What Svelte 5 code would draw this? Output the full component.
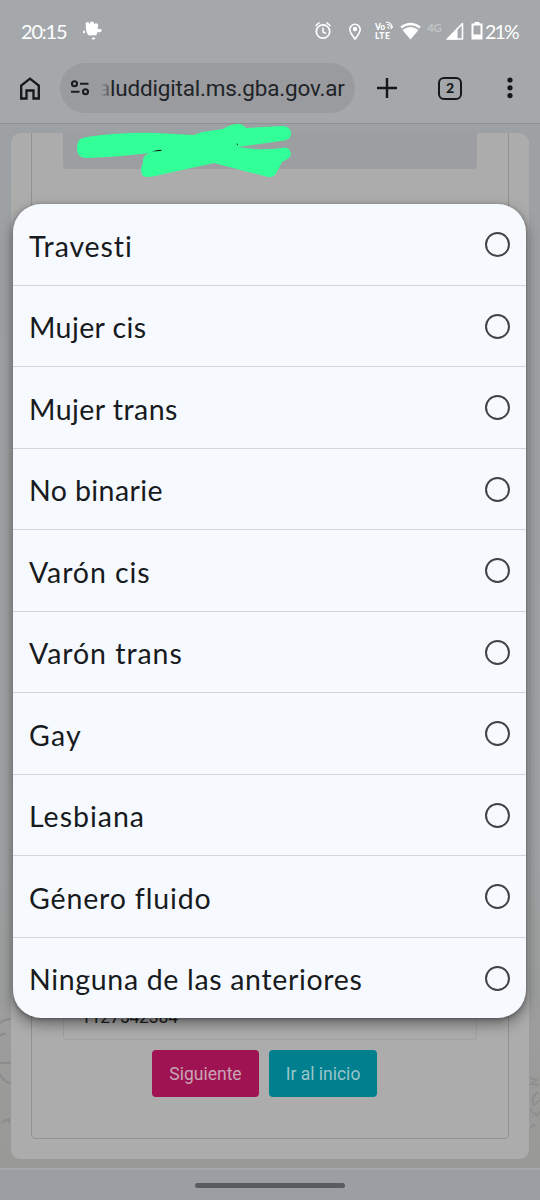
<script lang="ts">
    type Option = { label: string; spacing: number };

    // spacing is the tracking of each label, in px
    const options: Option[] = [
        { label: 'Travesti', spacing: 0.9 },
        { label: 'Mujer cis', spacing: 0.4 },
        { label: 'Mujer trans', spacing: 0.45 },
        { label: 'No binarie', spacing: 0.4 },
        { label: 'Varón cis', spacing: 0.9 },
        { label: 'Varón trans', spacing: 0.95 },
        { label: 'Gay', spacing: 1.2 },
        { label: 'Lesbiana', spacing: 1 },
        { label: 'Género fluido', spacing: 0.85 },
        { label: 'Ninguna de las anteriores', spacing: 0.67 }
    ];

    let selected = $state<string | null>(null);
</script>

<div class="screen">
    <header>
        <div class="status">
            <span class="time">20:15</span>
            <svg class="splat" width="20" height="19" viewBox="0 0 20 19" fill="#fff">
                <circle cx="9" cy="8.5" r="6" />
                <circle cx="4.5" cy="3" r="2" />
                <circle cx="9" cy="2.5" r="2" />
                <circle cx="13" cy="4.5" r="2.2" />
                <ellipse cx="15.5" cy="9.5" rx="3.2" ry="1.8" />
                <circle cx="5" cy="6" r="2.4" />
                <circle cx="12" cy="12.5" r="2" />
                <circle cx="6.5" cy="12.5" r="2" />
                <ellipse cx="1" cy="11" rx="1" ry="1.4" />
                <ellipse cx="10.5" cy="17.5" rx="1.8" ry="1" />
            </svg>
            <svg class="icons" width="171" height="24" viewBox="0 0 171 24" fill="none" stroke="#fff">
                <circle cx="9" cy="12.5" r="6.7" stroke-width="1.7" />
                <path d="M9 8.5V13l3 1.500M1.500 7l4-3.500M16.500 7l-4-3.500" stroke-width="1.6" />
                <path d="M41 20c-3-3.800-5.200-6.500-5.200-9.500a5.200 5.200 0 0 1 10.400 0C46.200 13.500 44 16.200 41 20Z" stroke-width="1.6" />
                <circle cx="41" cy="10" r="2.2" fill="#fff" stroke="none" />
                <text class="tiny" x="61" y="10.5">Vo</text>
                <text class="tiny" x="61" y="19.500" textLength="15">LTE</text>
                <path d="M73 5.500a4.500 4.500 0 0 1 4.500 4.500M72 3a7 7 0 0 1 6.500 6M73 8a2 2 0 0 1 2 2" stroke-width="1.1" />
                <path d="M87 8.500Q96.500 1.500 106 8.500" stroke-width="2.2" />
                <path d="M88.500 11Q96.500 5 104.500 11L96.500 20.500Z" fill="#fff" stroke="none" />
                <text class="net" x="113" y="12.5" textLength="15">4G</text>
                <path d="M133.500 20 148.500 4.500V20Z" stroke-width="1.6" stroke-linejoin="round" />
                <path d="M132 20.500 143.500 9V20.500Z" fill="#fff" stroke="none" />
                <path d="M158.500 5.500h9v14h-9Z" stroke-width="2" />
                <path d="M160.500 3h5v2.500h-5ZM159 15.500h8V20h-8Z" fill="#fff" stroke="none" />
            </svg>
            <span class="percent">21%</span>
        </div>
        <div class="toolbar">
            <svg class="home" width="20" height="23" viewBox="0 0 20 23" fill="none" stroke="#15181b" stroke-width="2.3">
                <path d="M1.200 21.500V8.500L10 1.600l8.800 6.900v13h-5.300v-8h-7v8Z" />
            </svg>
            <div class="address">
                <svg width="20" height="16" viewBox="0 0 20 16" fill="none" stroke="#1b1e21" stroke-width="2.1">
                    <circle cx="4.5" cy="3.7" r="2.5" />
                    <path d="M10 3.700h8.500M1 11.700h8.500" />
                    <circle cx="15.5" cy="11.7" r="2.5" />
                </svg>
                <span class="url"><i>a</i>luddigital.ms.gba.gov.ar</span>
            </div>
            <svg class="plus" width="20" height="20" viewBox="0 0 20 20" stroke="#15181b" stroke-width="2.4">
                <path d="M10 0v20M0 10h20" />
            </svg>
            <span class="tabs">2</span>
            <svg class="more" width="6" height="22" viewBox="0 0 6 22" fill="#15181b">
                <circle cx="3" cy="3" r="2.6" />
                <circle cx="3" cy="10.8" r="2.6" />
                <circle cx="3" cy="18.6" r="2.6" />
            </svg>
        </div>
    </header>

    <main>
        <svg class="doodle left" width="11" height="120" viewBox="0 0 11 120" fill="none" stroke="#8c8c8c" stroke-width="2">
            <path d="M0 9Q4 5 11 5M0 22Q4 18 6 21M0 49H11M0 60Q4 69 11 69M2 108l7-3v4" />
        </svg>
        <svg class="doodle right" width="11" height="60" viewBox="0 0 11 60" fill="none" stroke="#8c8c8c" stroke-width="1.5">
            <path d="M1 4l7 2-6 4 8 1M9 18Q1 23 5 31l6-5M1 35l7 7 3-5M2 54q3-6 4-1" />
        </svg>
        <div class="card">
            <div class="form">
                <div class="disabled"></div>
                <div class="phone">1127542384</div>
                <div class="actions">
                    <button class="next">Siguiente</button>
                    <button class="start">Ir al inicio</button>
                </div>
            </div>
        </div>
    </main>

    <footer><span></span></footer>

    <svg class="scribble" width="220" height="56" viewBox="0 0 220 56" fill="#33ff99">
        <path d="M17 12Q7 13 7 21V24Q7 33 17 33Q49 32 79 28Q72 31 73 38Q69 45 73 51Q76 53 85 51L144 38 198 52Q204 53 207 47L212 37Q221 33 221 29Q220 21 211 23Q192 26 168 22L211 16Q221 15 221 9Q221 1 212 1L176 3Q173-1 168-1Q161-1 153 4L132 7 124 10 86 8Q51 7 17 12Z" />
        <path d="M82 26.500Q88 24 92 25L91 26ZM166 18.500l2 .500v1.500Z" fill="#102a1d" />
    </svg>

    <ul class="sheet">
        {#each options as option (option.label)}
            <li>
                <button class:selected={selected === option.label} onclick={() => (selected = option.label)}>
                    <span class="label" style="letter-spacing: {option.spacing}px">{option.label}</span>
                    <span class="radio"></span>
                </button>
            </li>
        {/each}
    </ul>
</div>

<style>
    :global(body) {
        margin: 0;
    }

    .screen {
        position: relative;
        display: flex;
        flex-direction: column;
        width: 540px;
        height: 1200px;
        overflow: hidden;
        background: #a4a8ab;
        font-family: Roboto, sans-serif;
    }

    header {
        flex: none;
        box-sizing: border-box;
        height: 124px;
        border-bottom: 1px solid #8f9295;
    }

    .status {
        display: flex;
        align-items: center;
        box-sizing: border-box;
        height: 62px;
        padding-left: 21px;
        color: #fff;
        font-family: Lato, sans-serif;
        font-size: 20px;
    }

    .time {
        flex: none;
        width: 62px;
        letter-spacing: -1.2px;
        white-space: nowrap;
    }

    .splat {
        flex: none;
        margin-top: -1px;
    }

    .icons {
        flex: none;
        margin-left: 211px;
    }

    .percent {
        font-size: 19.5px;
        letter-spacing: -1.8px;
        white-space: nowrap;
    }

    .tiny {
        fill: #fff;
        stroke: none;
        font: 900 8.5px Lato, sans-serif;
    }

    .net {
        fill: #c0c2c5;
        stroke: none;
        font: 700 12px Lato, sans-serif;
    }

    .toolbar {
        display: flex;
        align-items: center;
        height: 52px;
        padding-left: 20px;
    }

    .address {
        display: flex;
        align-items: center;
        box-sizing: border-box;
        width: 295px;
        height: 50px;
        margin-left: 20px;
        padding-left: 10px;
        border-radius: 25px;
        background: #9a9b9f;
    }

    .url {
        margin-left: 8px;
        color: #202327;
        font-size: 22.5px;
        letter-spacing: -0.2px;
        white-space: nowrap;
    }

    .url i {
        font-style: normal;
        background: linear-gradient(90deg, #9a9b9f 20%, #505256);
        background-clip: text;
        color: transparent;
    }

    .plus {
        margin-left: 22px;
    }

    .tabs {
        box-sizing: border-box;
        width: 24px;
        height: 23px;
        margin-left: 41px;
        border: 2.5px solid #15181b;
        border-radius: 6px;
        color: #15181b;
        font: 900 14px/18px Lato, sans-serif;
        text-align: center;
    }

    .more {
        margin-left: 45px;
    }

    main {
        position: relative;
        display: flex;
        flex: 1;
        box-sizing: border-box;
        padding: 9px 11px;
        background: linear-gradient(#9da1a3, #9fa2a3 70%, #999996);
    }

    .doodle {
        position: absolute;
    }

    .doodle.left {
        left: 0;
        top: 890px;
    }

    .doodle.right {
        right: 0;
        top: 950px;
    }

    .card {
        display: flex;
        flex: 1;
        box-sizing: border-box;
        padding: 0 20px 20px;
        border-radius: 9px;
        background: #acacac;
        box-shadow: 0 0 1px #929496;
    }

    .form {
        display: flex;
        flex: 1;
        flex-direction: column;
        box-sizing: border-box;
        padding: 0 31px 41px;
        border: 1px solid #919191;
        border-top: 0;
        border-radius: 0 0 5px 5px;
    }

    .disabled {
        height: 36px;
        margin-bottom: auto;
        border-radius: 0 0 4px 4px;
        background: #9c9ea1;
    }

    .phone {
        box-sizing: border-box;
        height: 48px;
        padding-left: 17px;
        border: 1px solid #a0a0a0;
        border-radius: 4px;
        color: #202020;
        font-size: 17.5px;
        letter-spacing: -0.15px;
        line-height: 48px;
    }

    .actions {
        display: flex;
        justify-content: center;
        gap: 10px;
        margin: 10px 11px 0 0;
    }

    .actions button {
        box-sizing: border-box;
        width: 107px;
        height: 47px;
        padding: 0;
        border: 0;
        border-radius: 4px;
        font-family: Roboto, sans-serif;
        font-size: 17.5px;
        white-space: nowrap;
    }

    .actions .next {
        background: #a01352;
        color: #c8a5b4;
    }

    .actions .start {
        width: 108px;
        background: #007f8e;
        color: #9bc5ca;
    }

    footer {
        display: flex;
        flex: none;
        justify-content: center;
        box-sizing: border-box;
        height: 32px;
        padding-top: 13px;
        border-top: 2px solid #a5a8ab;
        background: #9c9ea3;
    }

    footer span {
        width: 150px;
        height: 5px;
        border-radius: 3px;
        background: #595b5e;
    }

    .scribble {
        position: absolute;
        left: 70px;
        top: 125px;
        overflow: visible;
    }

    .sheet {
        position: absolute;
        left: 13px;
        top: 204px;
        width: 513px;
        height: 814px;
        margin: 0;
        padding: 0;
        overflow: hidden;
        border-radius: 28px;
        background: #f6f9fe;
        box-shadow: 0 6px 14px rgba(0, 0, 0, 0.4), 0 1px 4px rgba(0, 0, 0, 0.3);
        list-style: none;
    }

    li {
        box-sizing: border-box;
        height: 81.5px;
        border-bottom: 1.5px solid #d2d6dc;
    }

    li:last-child {
        border-bottom: 0;
    }

    li button {
        display: flex;
        align-items: center;
        justify-content: space-between;
        box-sizing: border-box;
        width: 100%;
        height: 81px;
        padding: 0 16px;
        border: 0;
        background: none;
        cursor: pointer;
    }

    .label {
        padding-top: 2px;
        color: #171b20;
        font-family: Lato, sans-serif;
        font-size: 28.5px;
        font-variant-ligatures: none;
        white-space: nowrap;
    }

    .radio {
        box-sizing: border-box;
        width: 25px;
        height: 25px;
        border: 2.5px solid #404347;
        border-radius: 50%;
    }

    .selected .radio {
        border-width: 8px;
    }
</style>
